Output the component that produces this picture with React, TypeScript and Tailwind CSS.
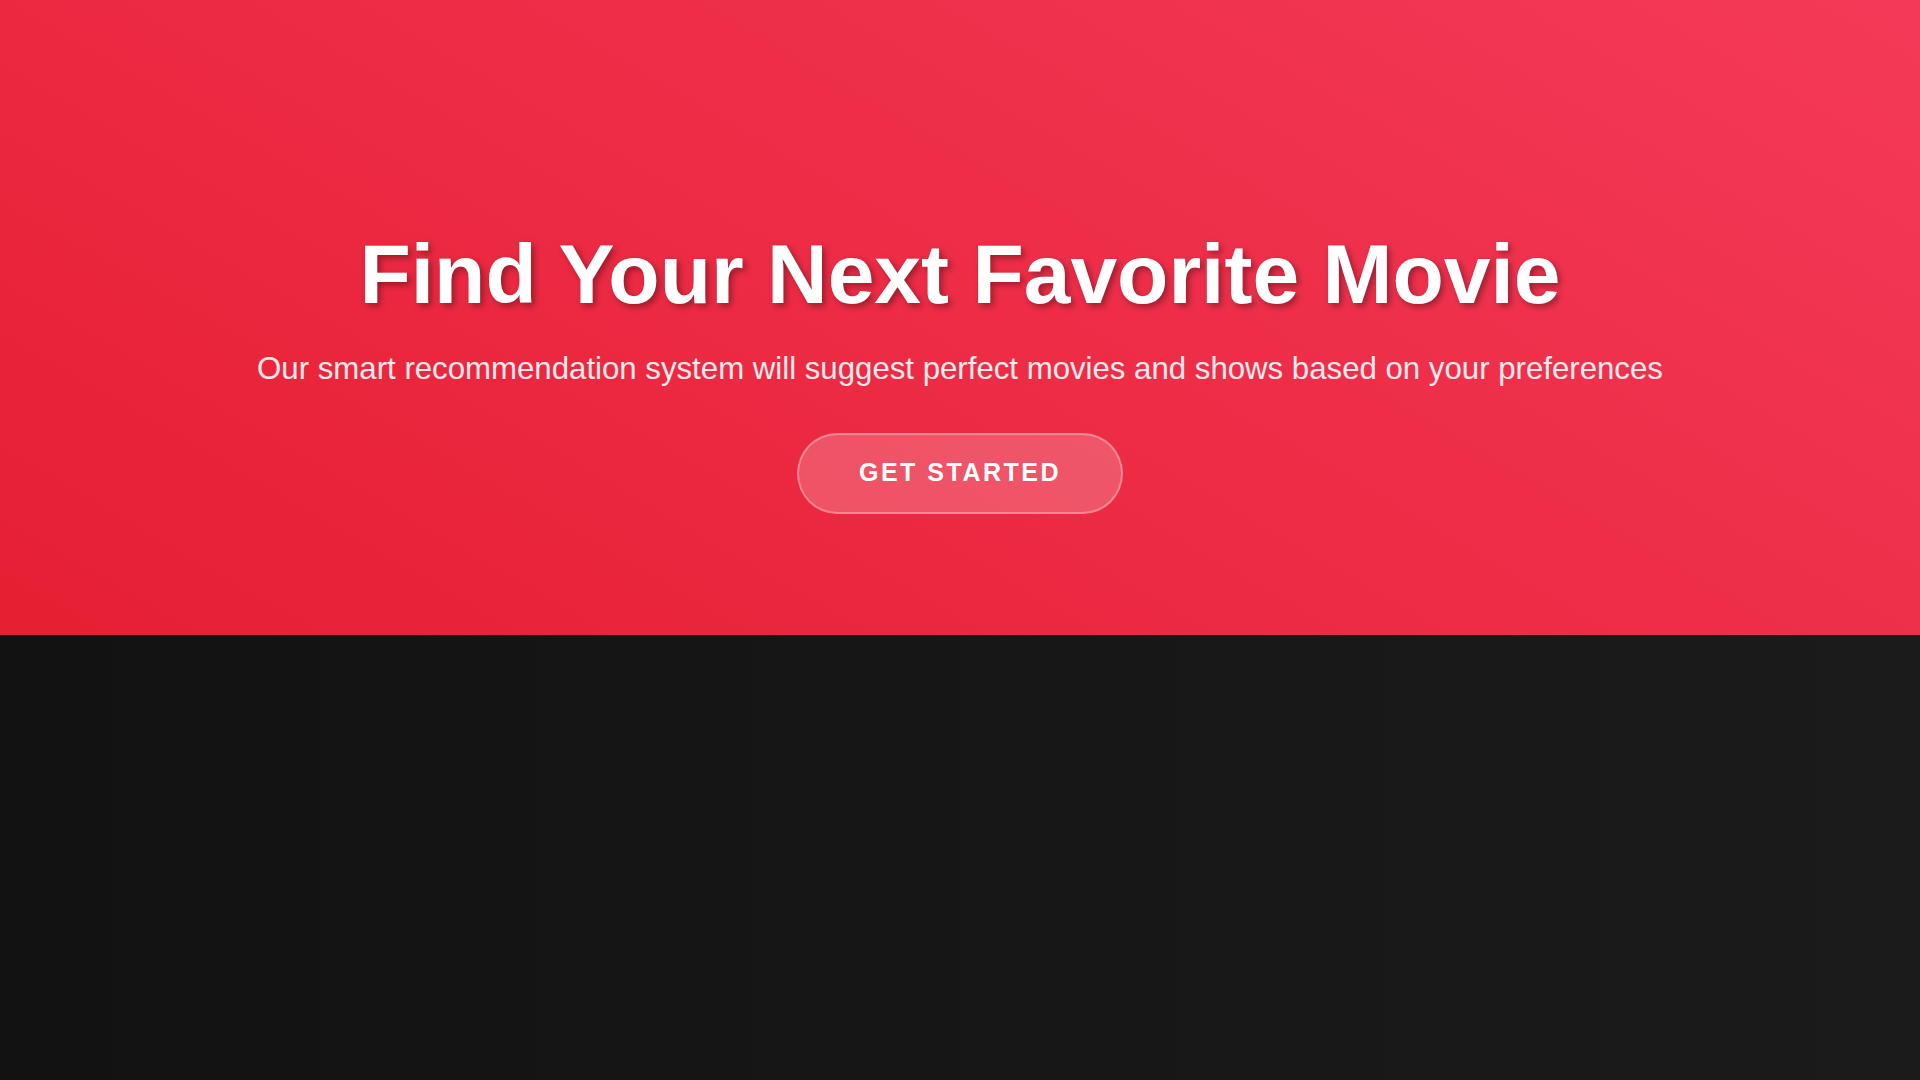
export default function App() {
  return (
    <div className="min-h-screen bg-[linear-gradient(90deg,#121212,#1b1b1b)] font-['Liberation_Sans',Arial,sans-serif]">
      {/* Hero */}
      <section className="h-[635px] bg-[linear-gradient(30deg,#e61f33,#f43958)] flex flex-col items-center pt-[224px] text-center text-white">
        <h1 className="text-[84px] leading-[1.2] font-bold mb-[21px] [text-shadow:3px_3px_6px_rgba(0,0,0,0.35)]">
          Find Your Next Favorite Movie
        </h1>
        <p className="text-[31.2px] leading-[1.5] text-white/90 mb-[40px]">
          Our smart recommendation system will suggest perfect movies and shows based on your preferences
        </p>
        <button className="w-[326px] h-[81px] rounded-full border-2 border-white/30 bg-white/20 text-[25px] font-bold tracking-[2.5px] uppercase">
          Get Started
        </button>
      </section>
    </div>
  );
}
